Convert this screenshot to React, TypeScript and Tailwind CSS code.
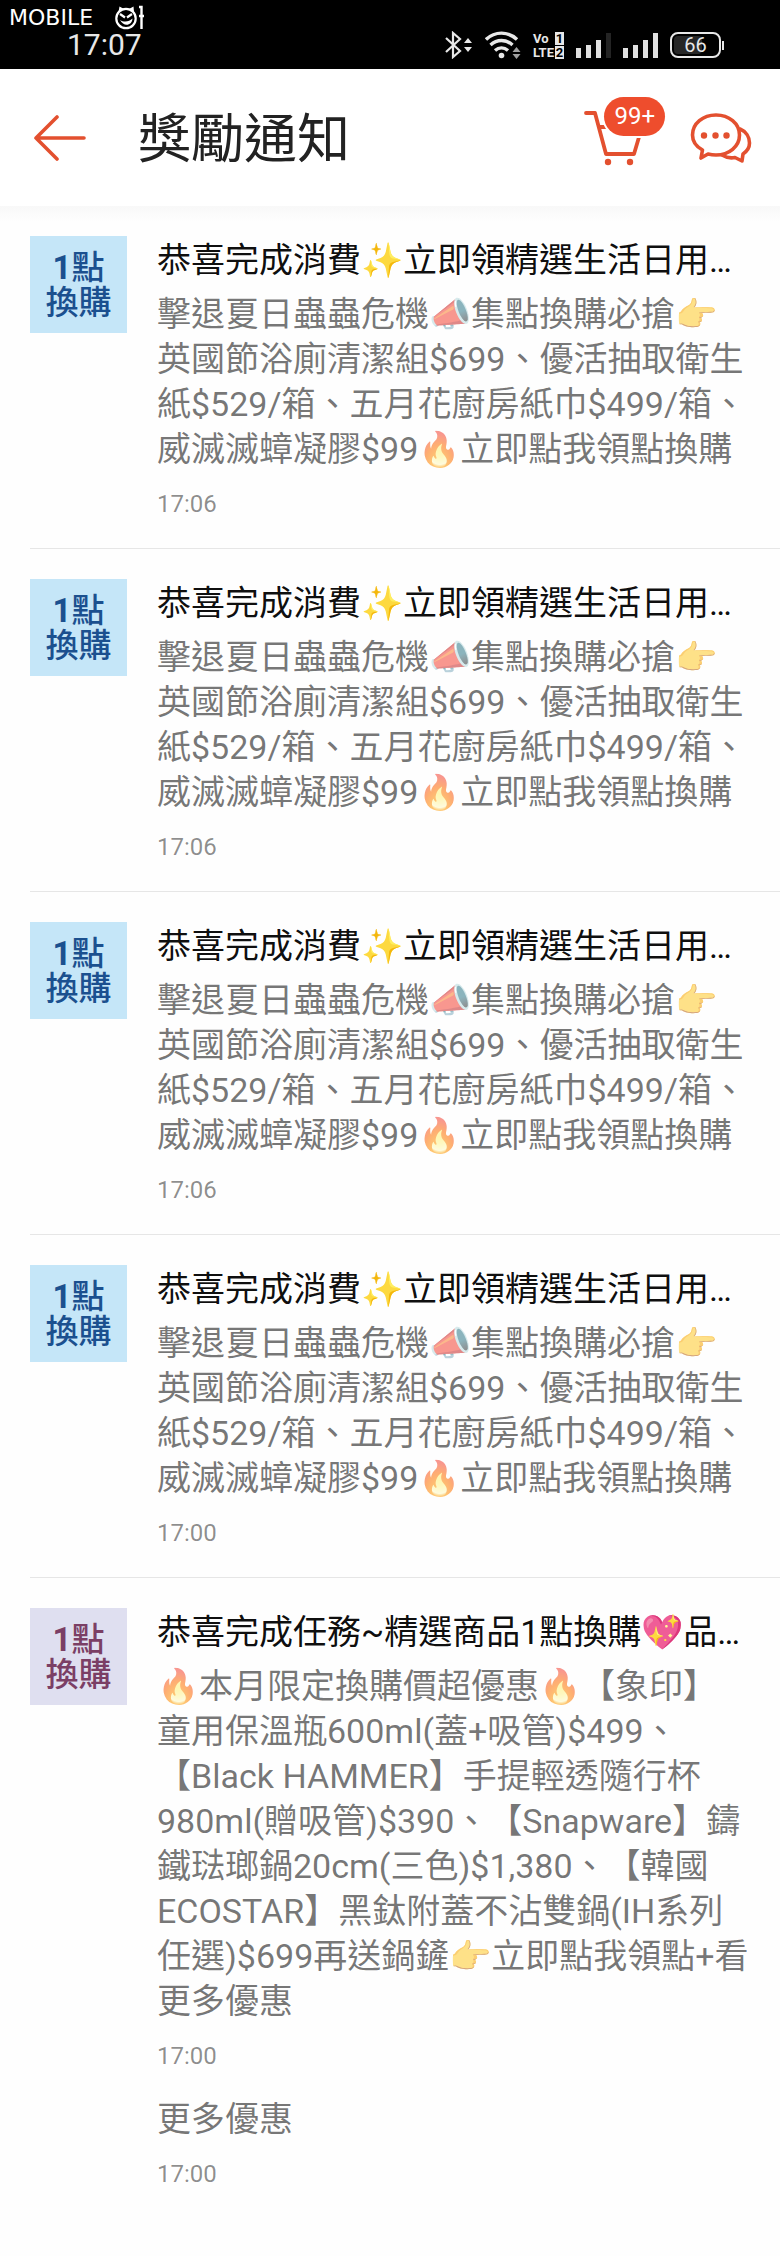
type Tone = "blue" | "purple";

type Entry = {
  text: string;
  time: string;
};

type Notice = {
  id: number;
  tone: Tone;
  title: string;
  entries: Entry[];
};

const PEST_TITLE = "恭喜完成消費✨立即領精選生活日用…";
const PEST_TEXT =
  "擊退夏日蟲蟲危機📣集點換購必搶👉英國節浴廁清潔組$699、優活抽取衛生紙$529/箱、五月花廚房紙巾$499/箱、威滅滅蟑凝膠$99🔥立即點我領點換購";

const notices: Notice[] = [
  { id: 1, tone: "blue", title: PEST_TITLE, entries: [{ text: PEST_TEXT, time: "17:06" }] },
  { id: 2, tone: "blue", title: PEST_TITLE, entries: [{ text: PEST_TEXT, time: "17:06" }] },
  { id: 3, tone: "blue", title: PEST_TITLE, entries: [{ text: PEST_TEXT, time: "17:06" }] },
  { id: 4, tone: "blue", title: PEST_TITLE, entries: [{ text: PEST_TEXT, time: "17:00" }] },
  {
    id: 5,
    tone: "purple",
    title: "恭喜完成任務~精選商品1點換購💖品…",
    entries: [
      {
        text: "🔥本月限定換購價超優惠🔥【象印】童用保溫瓶600ml(蓋+吸管)$499、【Black HAMMER】手提輕透隨行杯980ml(贈吸管)$390、【Snapware】鑄鐵琺瑯鍋20cm(三色)$1,380、【韓國ECOSTAR】黑鈦附蓋不沾雙鍋(IH系列任選)$699再送鍋鏟👉立即點我領點+看更多優惠",
        time: "17:00",
      },
      { text: "更多優惠", time: "17:00" },
    ],
  },
];

const tones: Record<Tone, string> = {
  blue: "bg-[#c5e6f8] text-[#1b508f]",
  purple: "bg-[#dfdff0] text-[#7b3f65]",
};

export default function App() {
  return (
    <div className="min-h-screen bg-[#fefefe] font-[Roboto,'Noto_Sans_CJK_TC',sans-serif] [text-spacing-trim:space-all]">
      <StatusBar />
      <Header />
      <main className="bg-linear-to-b from-[#f8f8f8] to-[#fefefe] to-[16px] pb-10">
        <ul>
          {notices.map((notice) => (
            <NoticeItem key={notice.id} notice={notice} />
          ))}
        </ul>
      </main>
    </div>
  );
}

function StatusBar() {
  return (
    <div className="relative flex items-center justify-between bg-black pt-7 pr-14 pb-[7px] pl-[67px] text-[#e8e8e8]">
      <Watermark />
      <span className="text-[30px] leading-[34px]">17:07</span>
      <div className="flex items-center gap-3">
        <BluetoothIcon />
        <WifiIcon />
        <VolteBadge />
        <SignalIcon bars={3} />
        <SignalIcon bars={4} />
        <Battery level={66} />
      </div>
    </div>
  );
}

function Watermark() {
  return (
    <div className="absolute top-[5px] left-[9px] flex items-center gap-[22px] text-white">
      <span className="font-['DejaVu_Sans',sans-serif] text-[22px] leading-[26px]">MOBILE</span>
      <svg width="30" height="26" viewBox="0 0 30 26" fill="none" stroke="currentColor" aria-hidden="true">
        <circle cx="11" cy="13.5" r="9.7" strokeWidth="2.2" />
        <path d="M3.500 7 4.500 1.500 9 4ZM14 4 18.500 1.500 19 7Z" fill="currentColor" stroke="none" />
        <path d="M5 9 10 12.500M17 9 12 12.500" strokeWidth="2.2" />
        <path d="M5 15C9 17.500 14 17 17.500 13.500C17 21 8.500 22 5 15Z" fill="currentColor" stroke="none" />
        <path d="M24 2H26.500V24M24 11H29" strokeWidth="2.4" />
      </svg>
    </div>
  );
}

function BluetoothIcon() {
  return (
    <svg width="28" height="28" viewBox="0 0 28 28" fill="none" stroke="currentColor" aria-label="Bluetooth">
      <path d="M1 7 15 20 8 26V2L15 8 1 21" strokeWidth="2.2" />
      <path d="M23 7 27 12H19ZM23 21 27 16H19Z" fill="currentColor" stroke="none" />
    </svg>
  );
}

function WifiIcon() {
  return (
    <svg width="36" height="28" viewBox="0 0 36 28" fill="none" stroke="currentColor" aria-label="Wi-Fi">
      <path d="M1 8.5C10 0 23 0 32 8.5" strokeWidth="3.4" />
      <path d="M5.5 14C12 8 21 8 27.5 14" strokeWidth="3.4" />
      <path d="M10 19.5C14 16 19 16 23 19.5" strokeWidth="3.4" />
      <circle cx="16.5" cy="24.5" r="2.8" fill="currentColor" stroke="none" />
      <path d="M31.5 16 35.5 21H27.5ZM31.5 28 35.5 23H27.5Z" fill="#a0a0a0" stroke="none" />
    </svg>
  );
}

function VolteBadge() {
  return (
    <div className="grid grid-cols-[auto_auto] gap-px text-[13px] leading-[13px] font-bold">
      <span>Vo</span>
      <span className="w-[9px] bg-[#e8e8e8] text-center text-black">1</span>
      <span>LTE</span>
      <span className="w-[9px] bg-[#e8e8e8] text-center text-black">2</span>
    </div>
  );
}

const barHeights = ["h-[10px]", "h-[13px]", "h-[18px]", "h-[25px]"];

function SignalIcon({ bars }: { bars: number }) {
  return (
    <div className="flex h-[25px] items-end gap-[5px]">
      {barHeights.map((height, index) => (
        <span key={height} className={`w-[5px] ${height} ${index < bars ? "bg-[#e0e0e0]" : "bg-[#242424]"}`} />
      ))}
    </div>
  );
}

function Battery({ level }: { level: number }) {
  return (
    <div className="flex items-center gap-px">
      <div className="relative h-[26px] w-[51px] rounded-[8px] border-2 border-[#e8e8e8] p-0.5">
        <div className="h-full rounded-[4px] bg-[#262626]" style={{ width: `${level}%` }} />
        <span className="absolute inset-0 text-center text-[20px] leading-[23px]">{level}</span>
      </div>
      <span className="h-[9px] w-0.5 bg-[#e8e8e8]" />
    </div>
  );
}

function Header() {
  return (
    <header className="flex items-center bg-white pt-[31px] pr-7 pb-[30px] pl-[34px] text-[#e3502f]">
      <button type="button" aria-label="返回">
        <svg width="54" height="46" viewBox="0 0 54 46" fill="none" stroke="currentColor" strokeWidth="3.6" strokeLinecap="round" strokeLinejoin="round">
          <path d="M50 23H2M23 2 2 23 23 44" />
        </svg>
      </button>
      <h1 className="ml-[50px] flex-1 pt-1 text-[53px] leading-[72px] text-[#222]">獎勵通知</h1>
      <button type="button" aria-label="購物車" className="relative mr-6">
        <svg width="84" height="72" viewBox="0 0 84 72" fill="none" stroke="currentColor" strokeWidth="3.8" strokeLinecap="round" strokeLinejoin="round">
          <path d="M4 11H13L24 52H52L60 25H17" />
          <circle cx="26" cy="60" r="3.2" fill="currentColor" stroke="none" />
          <circle cx="48" cy="60" r="3.2" fill="currentColor" stroke="none" />
        </svg>
        <span className="absolute -top-[5px] right-px rounded-full bg-[#ee4d2d] px-[10px] text-[24px] leading-[39px] text-white ring-2 ring-white">
          99+
        </span>
      </button>
      <button type="button" aria-label="聊天">
        <svg width="62" height="52" viewBox="0 0 62 52" fill="none" stroke="currentColor" strokeWidth="3.6" strokeLinecap="round" strokeLinejoin="round">
          <path d="M12.500 38C6 34.500 2.500 29 2.500 23C2.500 11.500 13 3 26 3S49.500 11.500 49.500 23S39 43 26 43C22.500 43 20 42.500 18 42L11 46Z" />
          <path d="M50 17C56 19.500 59.500 25 59.500 31C59.500 35.500 57.500 39 53 42L52 49 45 45.500C40 46.500 36 45.500 32 43" />
          <circle cx="14" cy="23.5" r="3.2" fill="currentColor" stroke="none" />
          <circle cx="25.5" cy="23.5" r="3.2" fill="currentColor" stroke="none" />
          <circle cx="36.5" cy="23.5" r="3.2" fill="currentColor" stroke="none" />
        </svg>
      </button>
    </header>
  );
}

function NoticeItem({ notice }: { notice: Notice }) {
  return (
    <li className="ml-[30px] flex items-start gap-[30px] border-b border-[#e6e6e6] pt-[30px] pb-[26px] last:border-b-0">
      <Thumbnail tone={notice.tone} />
      <div className="min-w-0 flex-1 pt-0.5">
        <h2 className="mr-5 mb-[9px] truncate text-[34px] leading-[45px] text-black/95">{notice.title}</h2>
        <div className="mr-[30px] flex flex-col gap-[23px]">
          {notice.entries.map((entry) => (
            <div key={entry.text}>
              <p className="text-[34px] leading-[45px] text-black/55">{entry.text}</p>
              <time className="mt-[14px] block text-[24px] leading-9 text-black/45">{entry.time}</time>
            </div>
          ))}
        </div>
      </div>
    </li>
  );
}

function Thumbnail({ tone }: { tone: Tone }) {
  return (
    <div className={`flex size-[97px] shrink-0 flex-col items-center justify-center text-[33px] leading-[35px] font-medium ${tones[tone]}`}>
      <span>
        <b>1</b>點
      </span>
      <span>換購</span>
    </div>
  );
}
